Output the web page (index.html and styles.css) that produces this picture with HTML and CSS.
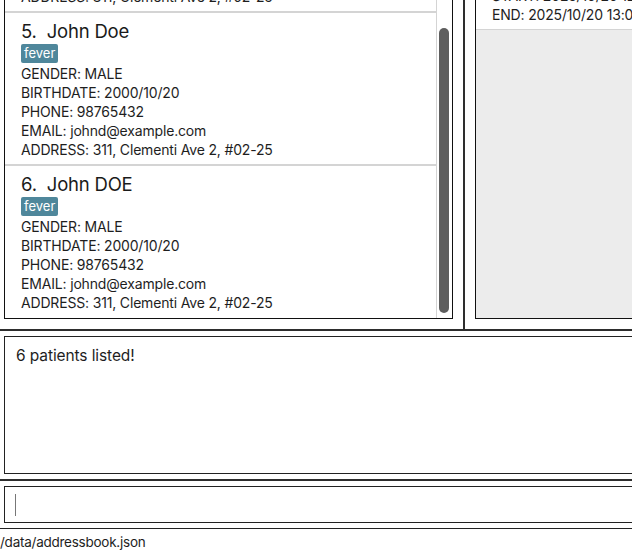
FILE: index.html
```html
<!DOCTYPE html>
<html>
<head>
<meta charset="utf-8">
<link rel="stylesheet" href="styles.css">
</head>
<body>
<div class="app">
  <div class="top">
    <div class="list-pane">
      <div class="list-scroll">
        <div class="card">
          <div class="name">4.&nbsp;&nbsp;John Doe</div>
          <div class="tags"><span class="tag">fever</span></div>
          <div class="line">GENDER: MALE</div>
          <div class="line">BIRTHDATE: 2000/10/20</div>
          <div class="line">PHONE: 98765432</div>
          <div class="line">EMAIL: johnd@example.com</div>
          <div class="line">ADDRESS: 311, Clementi Ave 2, #02-25</div>
        </div>
        <div class="card">
          <div class="name">5.&nbsp;&nbsp;John Doe</div>
          <div class="tags"><span class="tag">fever</span></div>
          <div class="line">GENDER: MALE</div>
          <div class="line">BIRTHDATE: 2000/10/20</div>
          <div class="line">PHONE: 98765432</div>
          <div class="line">EMAIL: johnd@example.com</div>
          <div class="line">ADDRESS: 311, Clementi Ave 2, #02-25</div>
        </div>
        <div class="card">
          <div class="name">6.&nbsp;&nbsp;John DOE</div>
          <div class="tags"><span class="tag">fever</span></div>
          <div class="line">GENDER: MALE</div>
          <div class="line">BIRTHDATE: 2000/10/20</div>
          <div class="line">PHONE: 98765432</div>
          <div class="line">EMAIL: johnd@example.com</div>
          <div class="line">ADDRESS: 311, Clementi Ave 2, #02-25</div>
        </div>
      </div>
      <div class="track"><div class="thumb"></div></div>
    </div>
    <div class="vdivider"></div>
    <div class="right-pane">
      <div class="appt">
        <div class="line">START: 2025/10/20 12:00</div>
        <div class="line">END: 2025/10/20 13:00</div>
      </div>
    </div>
  </div>
  <div class="hdivider"></div>
  <div class="section">
    <div class="result">6 patients listed!</div>
  </div>
  <div class="hdivider"></div>
  <div class="section">
    <div class="command"><span class="caret"></span></div>
  </div>
  <div class="status">/data/addressbook.json</div>
</div>
</body>
</html>
```

FILE: styles.css
```css
html, body {
  margin: 0;
  padding: 0;
  background: #ffffff;
}
body {
  width: 632px;
  height: 551px;
  overflow: hidden;
  font-family: Inter, "Noto Sans", sans-serif;
  color: #1e1e1e;
}
.app {
  width: 700px;
  display: flex;
  flex-direction: column;
}
.top {
  height: 329px;
  display: flex;
  flex-direction: row;
  align-items: flex-start;
}
.list-pane {
  margin-left: 4px;
  width: 447px;
  height: 318px;
  border-left: 1px solid #111;
  border-right: 1px solid #111;
  border-bottom: 1px solid #111;
  display: flex;
  flex-direction: row;
  overflow: hidden;
}
.list-scroll {
  width: 431px;
  height: 318px;
  border-right: 1px solid #d4d4d4;
  overflow: hidden;
  background: #fff;
}
.list-scroll .card:first-child {
  margin-top: -142px;
}
.card {
  border-top: 2px solid #d4d4d4;
  padding: 6px 0 5px 16px;
  height: 140px;
}
.name {
  font-size: 18.5px;
  line-height: 24px;
  height: 24px;
  color: #1a1a1a;
  letter-spacing: -0.2px;
}
.tags {
  margin-top: 1px;
  height: 20px;
  display: flex;
  align-items: flex-start;
}
.tag {
  background: #4f879b;
  color: #ffffff;
  font-size: 13px;
  line-height: 19px;
  padding: 0 3px;
  border-radius: 2px;
}
.line {
  font-size: 14px;
  line-height: 19px;
  height: 19px;
  letter-spacing: -0.17px;
  white-space: nowrap;
}
.track {
  width: 15px;
  height: 318px;
  display: flex;
  justify-content: center;
}
.thumb {
  margin-top: 28px;
  margin-left: -2px;
  width: 10px;
  height: 285px;
  border-radius: 5px;
  background: #5e5e5e;
}
.vdivider {
  margin-left: 10px;
  width: 2px;
  height: 329px;
  background: #2e2e2e;
}
.right-pane {
  margin-left: 10px;
  flex: 1;
  height: 318px;
  border-left: 1px solid #111;
  border-bottom: 1px solid #111;
  background: #ececec;
  overflow: hidden;
}
.appt {
  background: #fff;
  border-bottom: 1px solid #d4d4d4;
  padding: 0 0 5px 16px;
  margin-top: -14px;
}
.hdivider {
  height: 2px;
  background: #2e2e2e;
}
.section {
  padding: 5px 0 5px 4px;
}
.result {
  height: 126px;
  border: 1px solid #222;
  padding: 10px 11px 0;
  font-size: 15.5px;
  line-height: 18px;
  letter-spacing: -0.1px;
}
.command {
  height: 35px;
  border: 1px solid #222;
  display: flex;
  align-items: center;
  padding-left: 10px;
}
.caret {
  width: 1px;
  height: 22px;
  background: #777;
}
.status {
  border-top: 1px solid #222;
  font-size: 13.5px;
  line-height: 22px;
  padding-top: 2px;
  letter-spacing: -0.25px;
}
```
